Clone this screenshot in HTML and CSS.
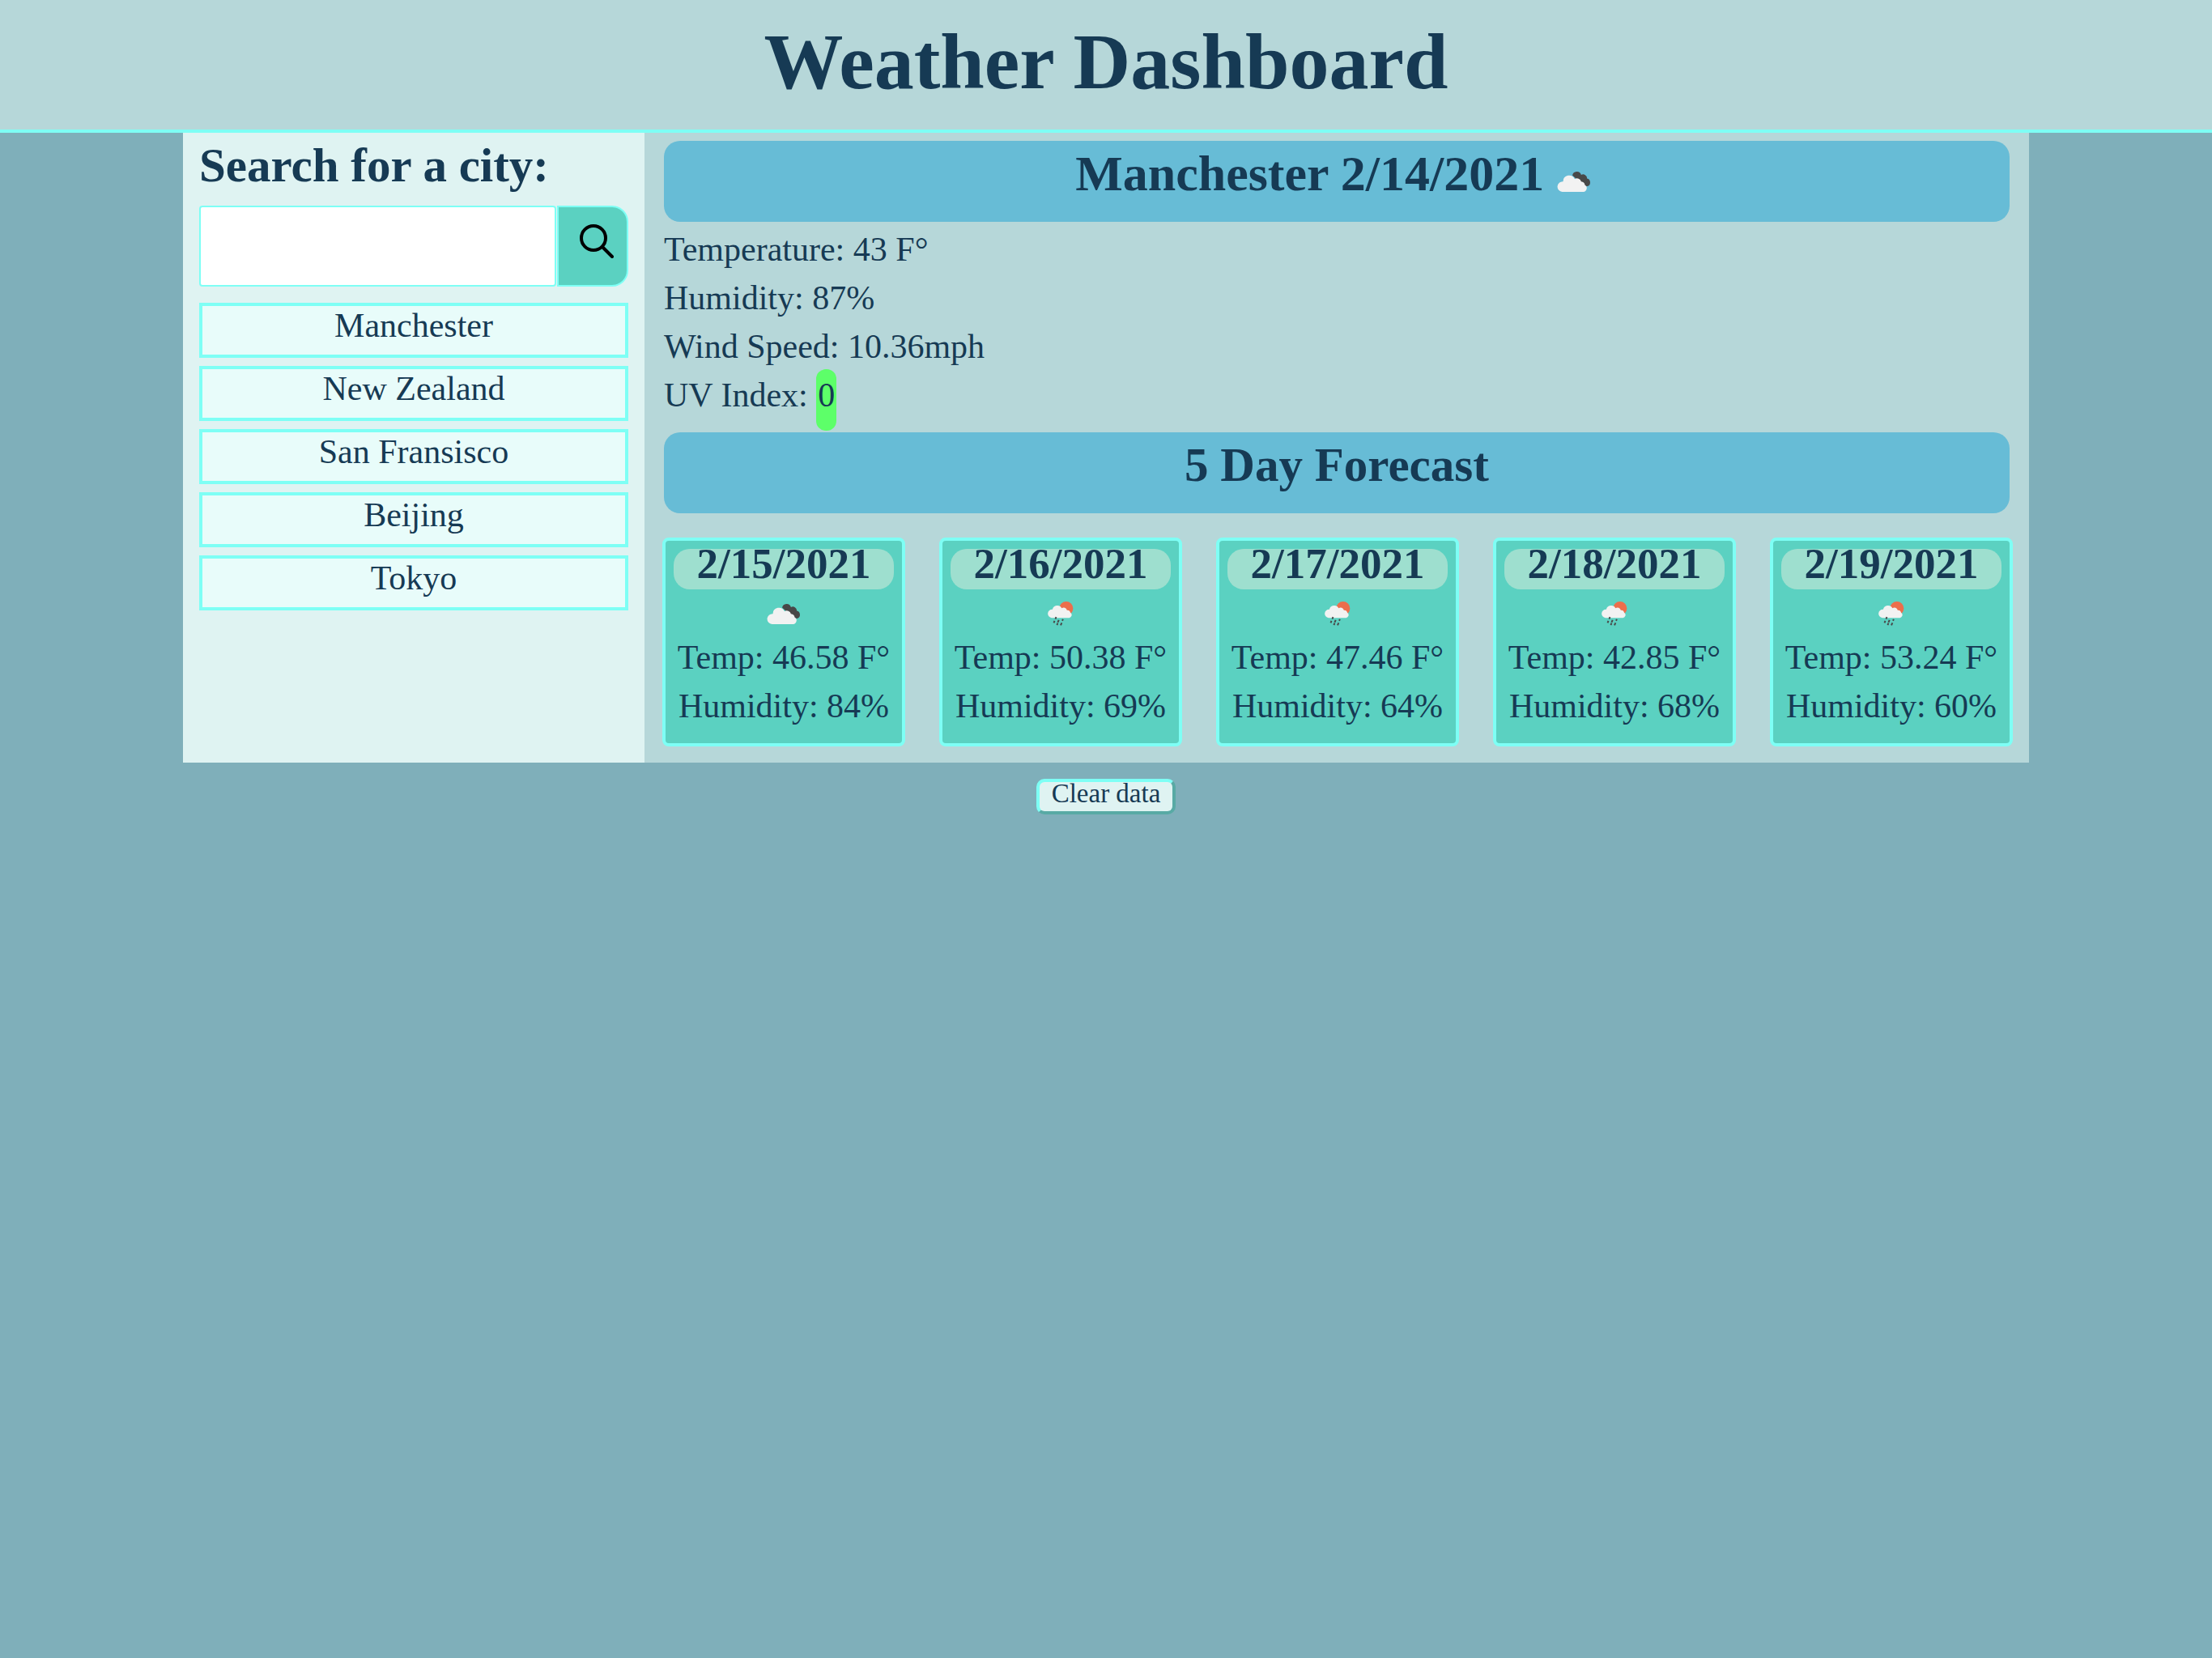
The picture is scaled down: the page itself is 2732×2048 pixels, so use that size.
FILE: index.html
```html
<!DOCTYPE html>
<html lang="en">
<head>
<meta charset="utf-8">
<meta name="viewport" content="width=device-width, initial-scale=1">
<title>Weather Dashboard</title>
<link rel="stylesheet" href="styles.css">
</head>
<body>
<svg class="sprite" aria-hidden="true">
  <symbol id="clouds" viewBox="76 62 129 79">
    <path fill="#484848" d="M133 79a17 17 0 0 1 33-2a15 15 0 0 1 22 14a15 15 0 0 1 1 29q-12 0-24-12z"/>
    <path fill="#f2f2f2" d="M95 141a19 19 0 0 1 3-39a23 23 0 0 1 44-9a16 16 0 0 1 24 9a16 16 0 0 1 14 13a14 14 0 0 1-8 26z"/>
  </symbol>
  <symbol id="rain" viewBox="73 70 96 92">
    <circle cx="142" cy="96" r="26" fill="#ec6e4c"/>
    <path fill="#f2f2f2" d="M87 132a15 15 0 0 1 3-32a19 19 0 0 1 35-5a13 13 0 0 1 20 8a12 12 0 0 1 13 9a11 11 0 0 1-7 20z"/>
    <path stroke="#484848" stroke-width="6" d="M104 129l-3 7M114 140l-4 9M130 137l-3 6M98 143l-3 8M125 151l-4 9M110 152l-3 7"/>
  </symbol>
</svg>
<header class="page-header"><h1>Weather Dashboard</h1></header>
<div class="container">
  <aside class="sidebar">
    <h2><label for="city">Search for a city:</label></h2>
    <form class="search">
      <input type="text" id="city">
      <button type="button" aria-label="Search">
        <svg width="42" height="42" viewBox="0 0 42 42" fill="none" stroke="#000" stroke-width="4" stroke-linecap="round" aria-hidden="true"><circle cx="17" cy="17" r="15"/><path d="M28 28l12 12"/></svg>
      </button>
    </form>
    <div class="cities">
      <button type="button">Manchester</button>
      <button type="button">New Zealand</button>
      <button type="button">San Fransisco</button>
      <button type="button">Beijing</button>
      <button type="button">Tokyo</button>
    </div>
  </aside>
  <main class="weather">
    <h2 class="banner banner-current">Manchester 2/14/2021 <svg class="clouds" aria-hidden="true"><use href="#clouds"/></svg></h2>
    <div class="stats">
      <p>Temperature: 43 F°</p>
      <p>Humidity: 87%</p>
      <p>Wind Speed: 10.36mph</p>
      <p>UV Index: <span class="uv">0</span></p>
    </div>
    <h2 class="banner">5 Day Forecast</h2>
    <div class="forecast">
      <article class="day">
        <h3>2/15/2021</h3>
        <div class="icon"><svg class="clouds" aria-hidden="true"><use href="#clouds"/></svg></div>
        <p>Temp: 46.58 F°</p>
        <p>Humidity: 84%</p>
      </article>
      <article class="day">
        <h3>2/16/2021</h3>
        <div class="icon"><svg class="rain" aria-hidden="true"><use href="#rain"/></svg></div>
        <p>Temp: 50.38 F°</p>
        <p>Humidity: 69%</p>
      </article>
      <article class="day">
        <h3>2/17/2021</h3>
        <div class="icon"><svg class="rain" aria-hidden="true"><use href="#rain"/></svg></div>
        <p>Temp: 47.46 F°</p>
        <p>Humidity: 64%</p>
      </article>
      <article class="day">
        <h3>2/18/2021</h3>
        <div class="icon"><svg class="rain" aria-hidden="true"><use href="#rain"/></svg></div>
        <p>Temp: 42.85 F°</p>
        <p>Humidity: 68%</p>
      </article>
      <article class="day">
        <h3>2/19/2021</h3>
        <div class="icon"><svg class="rain" aria-hidden="true"><use href="#rain"/></svg></div>
        <p>Temp: 53.24 F°</p>
        <p>Humidity: 60%</p>
      </article>
    </div>
  </main>
</div>
<div class="actions"><button type="button" class="clear">Clear data</button></div>
</body>
</html>
```
FILE: styles.css
```css
* {
  box-sizing: border-box;
}

body {
  margin: 0;
  background: #7fafba;
  color: #163a54;
  font: 42px/60px "Liberation Serif", serif;
}

h1, h2, h3, p {
  margin: 0;
}

button, input {
  font: inherit;
  color: inherit;
}

.sprite {
  display: none;
}

.page-header {
  padding-bottom: 8px;
  border-bottom: 4px solid #7efff5;
  background: #b6d7d9;
  text-align: center;
}

h1 {
  font-size: 98px;
  line-height: 152px;
}

h2 {
  font-size: 59px;
  line-height: 80px;
}

.container {
  display: grid;
  grid-template-columns: minmax(0, 1fr) minmax(0, 3fr);
  max-width: 2280px;
  margin: 0 auto;
}

.sidebar {
  padding: 0 20px 20px;
  background: #dff3f2;
}

.search {
  display: flex;
  gap: 1px;
  height: 100px;
  margin: 10px 0 20px;
}

.search input {
  flex: 1;
  min-width: 0;
  padding: 0 20px;
  border: 2px solid #7efff5;
  border-radius: 4px;
  background: #fff;
}

.search button {
  display: flex;
  align-items: center;
  justify-content: center;
  width: 88px;
  padding: 0 0 12px 10px;
  border: 2px solid #7efff5;
  border-radius: 0 20px 20px 0;
  background: #5bd1c1;
}

.cities {
  display: flex;
  flex-direction: column;
  gap: 10px;
}

.cities button {
  padding: 0 0 12px;
  border: 4px solid #7efff5;
  background: #e8fcfa;
  line-height: 48px;
}

.weather {
  padding: 10px 0 20px;
  background: #b6d7d9;
}

.banner {
  margin: 0 24px;
  padding-bottom: 20px;
  border-radius: 20px;
  background: #67bcd6;
  text-align: center;
}

.banner-current {
  font-size: 62px;
}

.banner .clouds {
  margin-right: 8px;
  vertical-align: -2px;
}

.clouds {
  width: 43px;
  height: 26px;
}

.rain {
  width: 32px;
  height: 30px;
}

.stats {
  padding: 4px 24px 16px;
}

.uv {
  padding: 9px 2px 21px;
  border-radius: 12px;
  background: #5dff69;
}

.forecast {
  display: grid;
  grid-template-columns: repeat(5, 1fr);
  gap: 42px;
  margin-top: 30px;
  padding: 0 20px 0 22px;
}

.day {
  padding: 10px 10px 16px;
  border: 4px solid #7efff5;
  border-radius: 8px;
  background: #5bd1c1;
  text-align: center;
  white-space: nowrap;
}

.day h3 {
  padding-bottom: 14px;
  border-radius: 20px;
  background: #9edfcf;
  font-size: 53px;
  line-height: 36px;
}

.icon {
  display: flex;
  align-items: center;
  justify-content: center;
  height: 54px;
  padding-top: 6px;
}

.actions {
  padding: 20px;
  text-align: center;
  line-height: 0;
}

.clear {
  padding: 0 15px 8px;
  border: 4px solid;
  border-color: #7efff5 #58aaa5 #58aaa5 #7efff5;
  border-radius: 10px;
  background: #dff3f2;
  font-size: 33px;
  line-height: 28px;
}
```
